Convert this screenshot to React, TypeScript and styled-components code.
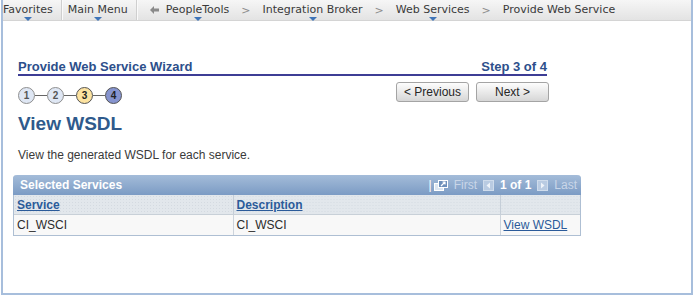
import React from "react"
import styled, { createGlobalStyle } from "styled-components"

const GlobalStyle = createGlobalStyle`
	html, body {
		margin: 0;
		padding: 0;
		background: #fff;
	}
	body {
		font-family: Arial, "Liberation Sans", sans-serif;
	}
`

const crumbs = ["PeopleTools", "Integration Broker", "Web Services"]

export default function App() {
	return (
		<>
			<GlobalStyle />
			<Frame>
				<NavBar>
					<NavItem $menu>Favorites</NavItem>
					<Divider />
					<NavItem $menu>Main Menu</NavItem>
					<Divider />
					<BackButton aria-label="Back">
						<svg width="9" height="8" viewBox="0 0 9 8">
							<path d="M0 4 L4 0 L4 2.5 L9 2.5 L9 5.5 L4 5.5 L4 8 Z" fill="#8a8a8a" />
						</svg>
					</BackButton>
					{crumbs.map(c => (
						<React.Fragment key={c}>
							<NavItem $menu>{c}</NavItem>
							<Chevron>&gt;</Chevron>
						</React.Fragment>
					))}
					<NavItem>Provide Web Service</NavItem>
				</NavBar>

				<Content>
					<WizardHeader>
						<WizardTitle>Provide Web Service Wizard</WizardTitle>
						<WizardTitle>Step 3 of 4</WizardTitle>
					</WizardHeader>

					<WizardRow>
						<Steps>
							{[1, 2, 3, 4].map(n => (
								<React.Fragment key={n}>
									{n > 1 && <Connector />}
									<StepCircle $state={n < 3 ? "done" : n === 3 ? "current" : "next"}>
										{n}
									</StepCircle>
								</React.Fragment>
							))}
						</Steps>
						<Buttons>
							<Button>&lt; Previous</Button>
							<Button>Next &gt;</Button>
						</Buttons>
					</WizardRow>

					<PageTitle>View WSDL</PageTitle>
					<Instructions>View the generated WSDL for each service.</Instructions>

					<Grid>
						<GridHeader>
							<GridTitle>Selected Services</GridTitle>
							<Pager>
								<PagerBar>|</PagerBar>
								<svg width="14" height="11" viewBox="0 0 14 11">
									<rect x="0.5" y="3.5" width="9" height="7" fill="#dce6f2" stroke="#fff" />
									<rect x="4.5" y="0.5" width="9" height="7" fill="#6d8fbb" stroke="#fff" />
									<path d="M7 6 L11 2 M8.5 2 L11 2 L11 4.5" stroke="#fff" strokeWidth="1.2" fill="none" />
								</svg>
								<PagerText>First</PagerText>
								<ArrowBox dir="left" />
								<PagerCount>1 of 1</PagerCount>
								<ArrowBox dir="right" />
								<PagerText>Last</PagerText>
							</Pager>
						</GridHeader>
						<Table>
							<colgroup>
								<col style={{ width: 219 }} />
								<col style={{ width: 267 }} />
								<col />
							</colgroup>
							<thead>
								<tr>
									<HeadCell><HeadLink>Service</HeadLink></HeadCell>
									<HeadCell><HeadLink>Description</HeadLink></HeadCell>
									<HeadCell />
								</tr>
							</thead>
							<tbody>
								<tr>
									<Cell>CI_WSCI</Cell>
									<Cell>CI_WSCI</Cell>
									<Cell><RowLink>View WSDL</RowLink></Cell>
								</tr>
							</tbody>
						</Table>
					</Grid>
				</Content>
			</Frame>
		</>
	)
}

function ArrowBox({ dir }: { dir: "left" | "right" }) {
	const path = dir === "left" ? "M7 2.5 L3.5 5.5 L7 8.5 Z" : "M4 2.5 L7.5 5.5 L4 8.5 Z"
	return (
		<svg width="11" height="11" viewBox="0 0 11 11">
			<rect x="0.5" y="0.5" width="10" height="10" fill="#b9cbe2" stroke="#cfdcec" />
			<path d={path} fill="#eef3f9" />
		</svg>
	)
}

const Frame = styled.div`
	box-sizing: border-box;
	width: 692px;
	height: 295px;
	margin-left: 1px;
	border: 2px solid #a7bedc;
	border-top: 0;
	display: flex;
	flex-direction: column;
`

const NavBar = styled.div`
	display: flex;
	align-items: center;
	height: 20px;
	background: linear-gradient(#f6f6f6, #e3e3e3);
	border-bottom: 1px solid #d4d4d4;
	font-family: "DejaVu Sans", Verdana, sans-serif;
	font-size: 11px;
	color: #3a3a3a;
`

const NavItem = styled.span<{ $menu?: boolean }>`
	position: relative;
	white-space: nowrap;
	line-height: 20px;

	&::after {
		content: "";
		display: ${p => (p.$menu ? "block" : "none")};
		position: absolute;
		left: 50%;
		bottom: -1px;
		margin-left: -4px;
		border-left: 4px solid transparent;
		border-right: 4px solid transparent;
		border-top: 4px solid #3f74b8;
	}
`

const Divider = styled.span`
	width: 1px;
	height: 20px;
	background: #cfcfcf;
	box-shadow: 1px 0 0 #fafafa;
	margin: 0 6px 0 8px;
`

const BackButton = styled.span`
	display: flex;
	align-items: center;
	margin: 0 7px 0 7px;
`

const Chevron = styled.span`
	color: #8c8c8c;
	margin: 0 12px;
`

const Content = styled.div`
	padding-left: 15px;
	display: flex;
	flex-direction: column;
`

const WizardHeader = styled.div`
	display: flex;
	justify-content: space-between;
	width: 529px;
	margin-top: 38px;
	border-bottom: 2px solid #3d3d95;
`

const WizardTitle = styled.span`
	font-size: 13px;
	font-weight: bold;
	line-height: 15px;
	color: #2d4f8b;
`

const WizardRow = styled.div`
	display: flex;
	justify-content: space-between;
	align-items: center;
	width: 531px;
	height: 20px;
	margin-top: 6px;
`

const Steps = styled.div`
	display: flex;
	align-items: center;
	padding-top: 6px;
`

const stepColors = {
	done: "#dfe7f4",
	current: "#fde3a0",
	next: "#8694cf"
}

const StepCircle = styled.span<{ $state: keyof typeof stepColors }>`
	box-sizing: border-box;
	width: 17px;
	height: 17px;
	border-radius: 50%;
	border: 1px solid ${p => (p.$state === "done" ? "#8f8f8f" : "#555")};
	background: ${p => stepColors[p.$state]};
	display: flex;
	align-items: center;
	justify-content: center;
	font-size: 10px;
	font-weight: bold;
	color: ${p => (p.$state === "done" ? "#555" : "#222")};
`

const Connector = styled.span`
	width: 12px;
	height: 1px;
	background: #666;
`

const Buttons = styled.div`
	display: flex;
	gap: 7px;
`

const Button = styled.button`
	box-sizing: border-box;
	width: 73px;
	height: 20px;
	padding: 0;
	border: 1px solid #a4a4a4;
	border-radius: 3px;
	background: linear-gradient(#fdfdfd, #e6e6e6 60%, #d6d6d6);
	font-family: Arial, "Liberation Sans", sans-serif;
	font-size: 12px;
	color: #262626;
`

const PageTitle = styled.h1`
	margin: 11px 0 0;
	font-size: 19px;
	line-height: 22px;
	font-weight: bold;
	color: #2f5a8c;
`

const Instructions = styled.p`
	margin: 13px 0 0;
	font-size: 12px;
	line-height: 14px;
	color: #3a3a3a;
`

const Grid = styled.div`
	width: 566px;
	margin: 13px 0 0 -5px;
	border: 1px solid #aebfd3;
	border-top: 0;
	border-radius: 4px 4px 0 0;
`

const GridHeader = styled.div`
	display: flex;
	justify-content: space-between;
	align-items: center;
	height: 20px;
	margin: 0 -1px;
	padding: 0 4px 0 7px;
	border-radius: 4px 4px 0 0;
	background: linear-gradient(#a4bcd9, #7b9bc4);
`

const GridTitle = styled.span`
	font-size: 12px;
	font-weight: bold;
	color: #fff;
`

const Pager = styled.div`
	display: flex;
	align-items: center;
	gap: 6px;
	font-size: 12px;
`

const PagerBar = styled.span`
	color: #fff;
	margin-right: -4px;
`

const PagerText = styled.span`
	color: #c9d6e8;
`

const PagerCount = styled.span`
	color: #fff;
	font-weight: bold;
`

const Table = styled.table`
	width: 100%;
	border-collapse: collapse;
	table-layout: fixed;
	font-size: 12px;
`

const HeadCell = styled.th`
	height: 19px;
	padding: 0 3px;
	text-align: left;
	background-color: #e2e7ec;
	background-image: radial-gradient(#d4dae1 0.6px, transparent 0.8px);
	background-size: 3px 3px;
	border-right: 1px solid #c5ced8;
	border-bottom: 1px solid #c8d0d8;

	&:last-child {
		border-right: 0;
	}
`

const HeadLink = styled.a`
	font-weight: bold;
	color: #2b5b9a;
	text-decoration: underline;
`

const Cell = styled.td`
	height: 20px;
	padding: 0 3px;
	background: #f8f8f8;
	color: #2c2c2c;
	border-right: 1px solid #cdd4dc;

	&:last-child {
		border-right: 0;
	}
`

const RowLink = styled.a`
	color: #2b5b9a;
	text-decoration: underline;
`
